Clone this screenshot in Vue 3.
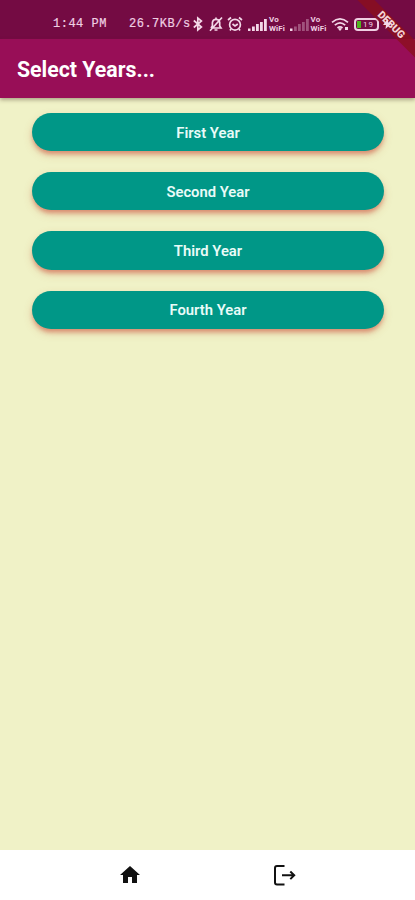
<script setup>
const years = ['First Year', 'Second Year', 'Third Year', 'Fourth Year']
</script>

<template>
  <div class="screen">
    <header class="status">
      <span class="time">1:44 PM</span>
      <span class="speed">26.7KB/s</span>
      <svg class="bt" width="12" height="16" viewBox="0 0 12 16"><path d="M1.8 4.5 9.4 11 5.8 14V2l3.6 3-7.6 6.5" /></svg>
      <svg class="bell" width="16" height="16" viewBox="0 0 16 16"><path d="M3 12h10l-1.3-2V6.5Q11.2 3.3 8 3.3T4.4 6.5V10L3 12M6.5 14h3M8 1.5v1.6M14 1.5 2 14.7" /></svg>
      <svg class="alarm" width="16" height="16" viewBox="0 0 16 16"><circle cx="8" cy="8.7" r="5.4" /><path d="M1 4 4 1.5M15 4l-3-2.5M5.5 8l2.5 2 2.8-2M4 13l-1 1.5M12 13l1 1.5" /></svg>
      <svg class="signal" width="19" height="12" viewBox="0 0 19 12"><path d="M0 9.5h2.5V12H0zM4 7.5h2.8V12H4zM8 5h2.8v7H8zM12 3h2.8v9H12zM16 0h2.8v12H16z" /></svg>
      <span class="vo"><b>Vo</b><b>WiFi</b></span>
      <svg class="signal second" width="19" height="12" viewBox="0 0 19 12"><path class="lit" d="M0 9.5h2.5V12H0z" /><path class="dim" d="M4 7.5h2.8V12H4zM8 5h2.8v7H8zM12 3h2.8v9H12zM16 0h2.8v12H16z" /></svg>
      <span class="vo"><b>Vo</b><b>WiFi</b></span>
      <svg class="wifi" width="19" height="15" viewBox="0 0 19 15"><path d="M1 5.3Q9-1.5 17 5.3M3.8 8.2Q9 3.6 14.2 8.2M6.5 11Q9 8.8 11.5 11" /><path class="solid" d="m9 14-2-2.2q2-1.5 4 0zM14 10h3v3h-3z" /></svg>
      <span class="battery"><i></i><em>19</em></span>
      <svg class="bolt" width="9" height="10" viewBox="0 0 9 10"><path d="M4.5 0 0 6h3l-.5 4L9 4H5.500z" /></svg>
    </header>
    <div class="ribbon">DEBUG</div>
    <div class="appbar"><h1>Select Years...</h1></div>
    <main>
      <button v-for="year in years" :key="year">{{ year }}</button>
    </main>
    <nav>
      <svg width="24" height="24" viewBox="0 0 24 24"><path class="home" d="M10 20v-6h4v6h5v-8h3L12 3 2 12h3v8z" /></svg>
      <svg width="26" height="24" viewBox="0 0 26 24"><path class="exit" d="M12.5 3H5Q3 3 3 5v14.5q0 2 2 2h7.5M10 12.300h12.300M18.300 8.500l3.900 3.800-3.900 3.800" /></svg>
    </nav>
  </div>
</template>

<style>
body { margin: 0; }
</style>

<style scoped>
.screen {
  position: relative;
  display: flex;
  flex-direction: column;
  width: 415px;
  height: 900px;
  overflow: hidden;
  background: #f0f2c7;
  font-family: Roboto, sans-serif;
}
.status {
  display: flex;
  align-items: center;
  box-sizing: border-box;
  height: 39px;
  padding: 9px 0 0 53px;
  background: #740b43;
  color: #efcfe2;
  flex: none;
}
.status > * { flex: none; }
.time, .speed {
  font: 12px/14px "Liberation Mono", monospace;
  letter-spacing: 0.5px;
  white-space: pre;
  -webkit-text-stroke: 0.2px #efcfe2;
}
.time { width: 76px; }
.speed { width: 63px; }
.status svg { fill: none; stroke: #f3d8e8; stroke-width: 1.7; }
.bell { margin-left: 4px; }
.alarm { margin-left: 3px; }
.status .signal, .status .bolt { fill: #f3d8e8; stroke: none; }
.signal { margin: 1px 2px 0 5px; }
.signal.second { margin-left: 2px; }
.dim { opacity: 0.35; }
.vo {
  display: flex;
  flex-direction: column;
  width: 18.500px;
  font-size: 8px;
  line-height: 9px;
  letter-spacing: 0.1px;
}
.wifi { margin-left: 2px; }
.status .solid { fill: #f3d8e8; stroke: none; }
.battery {
  display: flex;
  align-items: center;
  box-sizing: border-box;
  width: 25px;
  height: 13px;
  margin-left: 4px;
  padding: 1px;
  border: 2px solid #efcfe2;
  border-radius: 4px;
}
.battery i { width: 4px; height: 7px; background: #4fb51f; }
.battery em { flex: 1; font: 8px/9px Roboto, sans-serif; letter-spacing: 1px; text-align: center; }
.bolt { position: relative; z-index: 4; margin-left: 4px; }
.ribbon {
  position: absolute;
  z-index: 3;
  top: 19px;
  left: 341px;
  width: 100px;
  height: 12px;
  transform: rotate(45deg);
  background: rgba(140, 16, 28, 0.78);
  color: #f3d3d6;
  font-size: 10.5px;
  font-weight: 900;
  line-height: 12px;
  text-align: center;
}
.appbar {
  z-index: 1;
  display: flex;
  align-items: center;
  flex: none;
  height: 58.5px;
  padding: 0 17px;
  background: #980e57;
  box-shadow: 0 2px 4px rgba(70, 50, 35, 0.4);
}
h1 {
  margin: 3px 0 0;
  color: #fff;
  font-size: 21.3px;
  font-weight: 700;
  line-height: 24px;
}
main {
  display: flex;
  flex: 1;
  flex-direction: column;
  gap: 21px;
  padding: 15.5px 31px 0 32px;
}
button {
  height: 38.2px;
  padding: 1.5px 0 0;
  border: 0;
  border-radius: 20px;
  background: #009787;
  box-shadow: 0 4px 4px -1px rgba(205, 65, 50, 0.45), 0 4px 8px rgba(190, 90, 50, 0.26);
  color: #e9fbf8;
  font: 600 14.8px/36px Roboto, sans-serif;
}
nav {
  display: flex;
  align-items: center;
  flex: none;
  box-sizing: border-box;
  height: 50px;
  padding-left: 118px;
  gap: 130px;
  background: #fff;
}
.home { fill: #111; }
.exit { fill: none; stroke: #111; stroke-width: 2; }
</style>
